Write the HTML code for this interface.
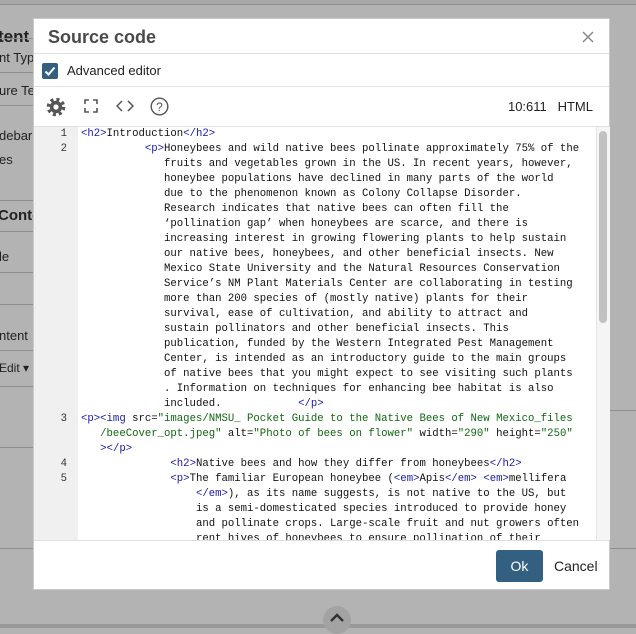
<!DOCTYPE html>
<html><head><meta charset="utf-8"><style>
*{margin:0;padding:0;box-sizing:border-box}
body{width:636px;height:628px;overflow:hidden;background:#b3b3b3;font-family:"Liberation Sans",sans-serif;position:relative}
.bg{position:absolute;color:#222;font-size:13px}
.hl{position:absolute;left:0;width:34px;height:1px;background:#8e8e8e}
#dlg{position:absolute;left:33px;top:18px;width:577px;height:572px;background:#fff;border:1px solid #c8ccd0}
.ln{position:absolute;left:0;right:0;height:1px;background:#dde1e4}
#code{position:absolute;left:0;top:108px;width:562px;height:413px;overflow:hidden}
#gut{position:absolute;left:0;top:0;width:44px;height:413px;background:#f0f0f0}
pre{font-family:"Liberation Mono",monospace;font-size:10.65px;line-height:15px;color:#111;white-space:pre}
#nums{position:absolute;left:0;top:0;width:33px;text-align:right;color:#333}
#txt{position:absolute;left:47px;top:0}
.t{color:#1a1aa6}.s{color:#116611}
</style></head><body>
<div style="position:absolute;left:0;top:0;width:636px;height:5px;background:#a9a9a9;border-bottom:1px solid #8e8e8e"></div>
<div class="bg" style="left:-2px;top:27px;font-size:17px;font-weight:bold">tent</div>
<div class="hl" style="top:38px"></div>
<div class="bg" style="left:-1px;top:50px">nt Typ</div>
<div class="hl" style="top:72px"></div>
<div class="bg" style="left:-1px;top:83px">ure Te</div>
<div class="hl" style="top:105px"></div>
<div class="bg" style="left:-1px;top:128px">debar</div>
<div class="bg" style="left:-1px;top:152px">es</div>
<div class="hl" style="top:200px"></div>
<div class="bg" style="left:-2px;top:207px;font-size:15px;font-weight:bold">Conte</div>
<div class="hl" style="top:231px"></div>
<div class="bg" style="left:-1px;top:249px">le</div>
<div class="hl" style="top:272px"></div>
<div class="hl" style="top:304px"></div>
<div class="bg" style="left:-1px;top:328px">ntent</div>
<div class="hl" style="top:350px"></div>
<div class="bg" style="left:-1px;top:361px;font-size:12px">Edit ▾</div>
<div class="hl" style="top:386px"></div>
<div class="hl" style="top:447px"></div>
<div class="hl" style="top:548px"></div>
<div style="position:absolute;left:610px;top:410px;width:26px;height:1px;background:#8e8e8e"></div>
<div style="position:absolute;left:610px;top:548px;width:26px;height:1px;background:#8e8e8e"></div>
<div style="position:absolute;left:0;top:624px;width:636px;height:4px;background:#999"></div>
<div style="position:absolute;left:323px;top:606px;width:28px;height:28px;border-radius:50%;background:#a3a3a3"></div>
<svg style="position:absolute;left:329px;top:613px" width="16" height="10"><path d="M2 8 L8 2 L14 8" stroke="#333" stroke-width="2.5" fill="none"/></svg>

<div id="dlg">
 <div style="position:absolute;left:14px;top:8px;font-size:18px;font-weight:bold;color:#4a4a4a">Source code</div>
 <svg style="position:absolute;left:548px;top:12px" width="12" height="12"><path d="M1 1L11 11M11 1L1 11" stroke="#888" stroke-width="1.5"/></svg>
 <div class="ln" style="top:34px"></div>
 <div style="position:absolute;left:8px;top:44px;width:16px;height:16px;border-radius:2px;background:#34607f"></div>
 <svg style="position:absolute;left:8px;top:44px" width="16" height="16"><path d="M3.5 8.5L6.5 11.5L12.5 4.5" stroke="#fff" stroke-width="2" fill="none"/></svg>
 <div style="position:absolute;left:33px;top:44px;font-size:13px;color:#222">Advanced editor</div>
 <div class="ln" style="top:67px"></div>
 <svg style="position:absolute;left:12px;top:78px" width="20" height="20" viewBox="0 0 20 20">
  <circle cx="10" cy="10" r="7.6" fill="none" stroke="#555" stroke-width="3.4" stroke-dasharray="3 3" />
  <circle cx="10" cy="10" r="6.2" fill="#555"/>
  <circle cx="10" cy="10" r="2.6" fill="#fff"/>
 </svg>
 <svg style="position:absolute;left:50px;top:80px" width="14" height="14"><path d="M1 5V1H5M9 1H13V5M13 9V13H9M5 13H1V9" stroke="#555" stroke-width="1.6" fill="none"/></svg>
 <svg style="position:absolute;left:82px;top:80px" width="18" height="14"><path d="M6 2L1 7L6 12M12 2L17 7L12 12" stroke="#555" stroke-width="1.5" fill="none"/></svg>
 <svg style="position:absolute;left:116px;top:78px" width="19" height="19"><circle cx="9.5" cy="9.5" r="8.3" stroke="#555" stroke-width="1.4" fill="none"/><text x="9.5" y="14" text-anchor="middle" font-family="Liberation Sans" font-size="12" fill="#555">?</text></svg>
 <div style="position:absolute;right:16px;top:80px;font-size:13px;color:#222">10:611&nbsp;&nbsp;&nbsp;HTML</div>
 <div class="ln" style="top:107px"></div>
 <div id="code">
  <div id="gut"></div>
<pre id="nums">1
2

















3


4
5</pre>
<pre id="txt"><span class="t">&lt;h2&gt;</span>Introduction<span class="t">&lt;/h2&gt;</span>
          <span class="t">&lt;p&gt;</span>Honeybees and wild native bees pollinate approximately 75% of the
             fruits and vegetables grown in the US. In recent years, however,
             honeybee populations have declined in many parts of the world
             due to the phenomenon known as Colony Collapse Disorder.
             Research indicates that native bees can often fill the
             ‘pollination gap’ when honeybees are scarce, and there is
             increasing interest in growing flowering plants to help sustain
             our native bees, honeybees, and other beneficial insects. New
             Mexico State University and the Natural Resources Conservation
             Service’s NM Plant Materials Center are collaborating in testing
             more than 200 species of (mostly native) plants for their
             survival, ease of cultivation, and ability to attract and
             sustain pollinators and other beneficial insects. This
             publication, funded by the Western Integrated Pest Management
             Center, is intended as an introductory guide to the main groups
             of native bees that you might expect to see visiting such plants
             . Information on techniques for enhancing bee habitat is also
             included.            <span class="t">&lt;/p&gt;</span>
<span class="t">&lt;p&gt;&lt;img</span> src=<span class="s">"images/NMSU_ Pocket Guide to the Native Bees of New Mexico_files</span>
<span class="s">   /beeCover_opt.jpeg"</span> alt=<span class="s">"Photo of bees on flower"</span> width=<span class="s">"290"</span> height=<span class="s">"250"</span>
   <span class="t">&gt;&lt;/p&gt;</span>
              <span class="t">&lt;h2&gt;</span>Native bees and how they differ from honeybees<span class="t">&lt;/h2&gt;</span>
              <span class="t">&lt;p&gt;</span>The familiar European honeybee (<span class="t">&lt;em&gt;</span>Apis<span class="t">&lt;/em&gt;</span> <span class="t">&lt;em&gt;</span>mellifera
                  <span class="t">&lt;/em&gt;</span>), as its name suggests, is not native to the US, but
                  is a semi-domesticated species introduced to provide honey
                  and pollinate crops. Large-scale fruit and nut growers often
                  rent hives of honeybees to ensure pollination of their</pre>
 </div>
 <div style="position:absolute;left:562px;top:108px;width:14px;height:413px;background:#f5f5f5;border-left:1px solid #e5e5e5"></div>
 <div style="position:absolute;left:565px;top:112px;width:8px;height:192px;border-radius:4px;background:#c1c1c1"></div>
 <div class="ln" style="top:521px"></div>
 <div style="position:absolute;left:462px;top:531px;width:47px;height:32px;border-radius:3px;background:#335f80;color:#fff;font-size:14px;text-align:center;line-height:32px">Ok</div>
 <div style="position:absolute;left:520px;top:539px;font-size:14px;color:#222">Cancel</div>
</div>
</body></html>
